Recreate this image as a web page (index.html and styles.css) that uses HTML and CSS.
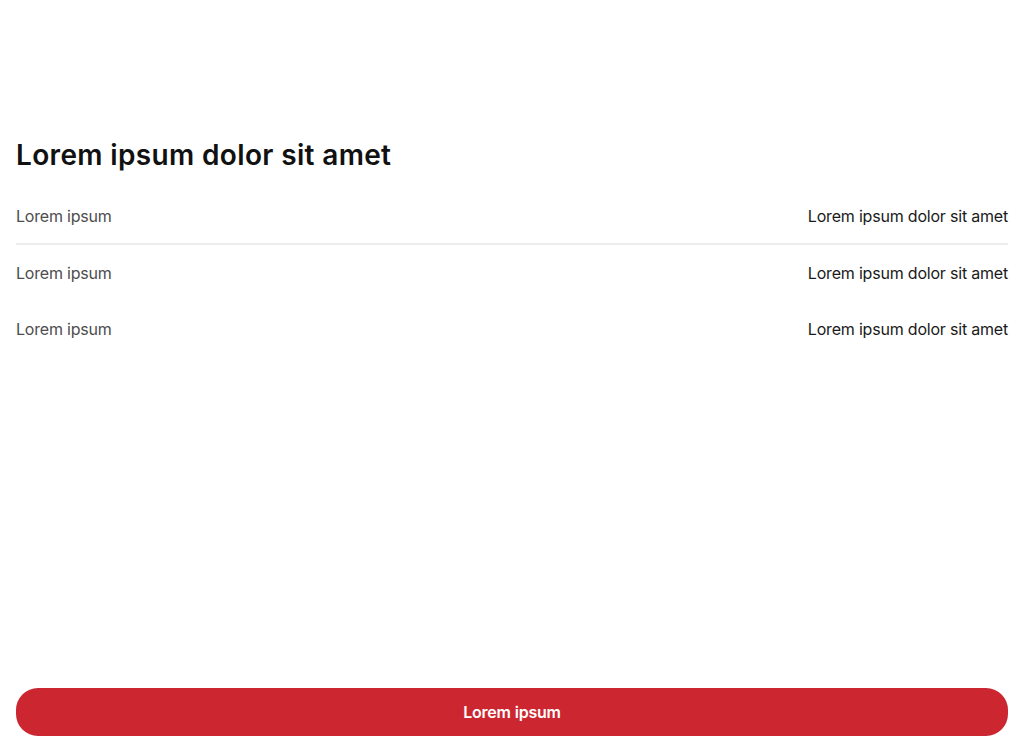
FILE: index.html
```html
<!DOCTYPE html>
<html lang="en">
<head>
<meta charset="utf-8">
<title>Lorem ipsum</title>
<link rel="stylesheet" href="styles.css">
</head>
<body>
<div class="page">
  <main class="content">
    <h1 class="title">Lorem ipsum dolor sit amet</h1>
    <ul class="details">
      <li class="row row--divided"><span class="label">Lorem ipsum</span><span class="value">Lorem ipsum dolor sit amet</span></li>
      <li class="row"><span class="label">Lorem ipsum</span><span class="value">Lorem ipsum dolor sit amet</span></li>
      <li class="row"><span class="label">Lorem ipsum</span><span class="value">Lorem ipsum dolor sit amet</span></li>
    </ul>
  </main>
  <footer class="actions">
    <button class="btn-primary" type="button">Lorem ipsum</button>
  </footer>
</div>
</body>
</html>
```

FILE: styles.css
```css
* { box-sizing: border-box; }
html, body { margin: 0; padding: 0; background: #fff; }
body {
  font-family: Inter, "Noto Sans", "Liberation Sans", sans-serif;
  color: #1a1a1a;
}
.page {
  height: 748px;
  display: flex;
  flex-direction: column;
  padding: 137px 16px 12px;
}
.content { flex: 1; }
.title {
  margin: 0 0 16px;
  font-size: 28px;
  line-height: 36px;
  font-weight: 600;
  color: #111;
  letter-spacing: 0.35px;
}
.details { list-style: none; margin: 0; padding: 0; }
.row {
  display: flex;
  justify-content: space-between;
  align-items: center;
  height: 56px;
  font-size: 16px;
  line-height: 24px;
  letter-spacing: -0.2px;
}
.row--divided {
  height: 56px;
  border-bottom: 2px solid #ececec;
  padding-bottom: 1px;
}
.label { color: #4d4d4d; }
.value { color: #1a1a1a; }
.btn-primary {
  display: block;
  width: 100%;
  height: 48px;
  border: none;
  border-radius: 22px;
  background: #cc2630;
  color: #fff;
  font-family: Inter, "Noto Sans", "Liberation Sans", sans-serif;
  font-size: 16px;
  font-weight: 600;
  letter-spacing: -0.2px;
  cursor: pointer;
}
```
